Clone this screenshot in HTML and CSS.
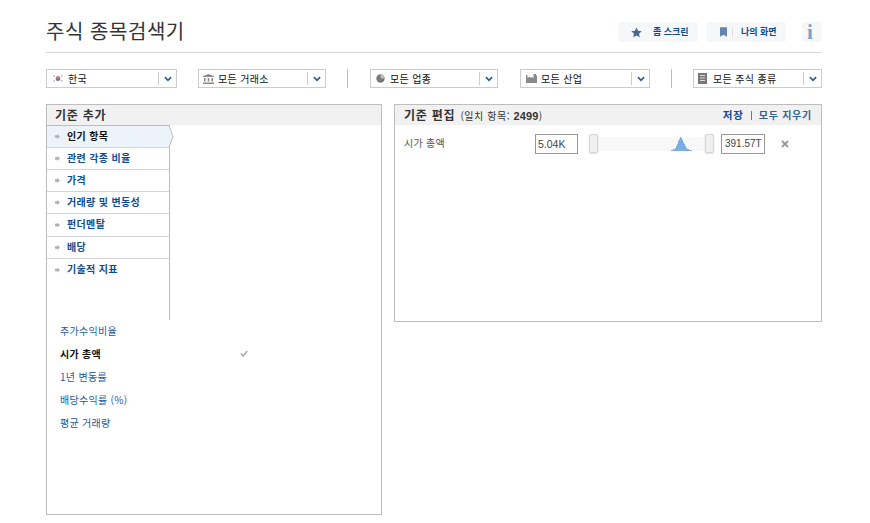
FILE: index.html
```html
<!DOCTYPE html>
<html lang="ko">
<head>
<meta charset="utf-8">
<title>주식 종목검색기</title>
<link rel="stylesheet" href="styles.css">
</head>
<body>
<div class="page">
  <header class="top">
    <h1 class="title">주식 종목검색기</h1>
    <div class="actions">
      <a class="action act-a"><svg class="aicon" viewBox="0 0 12 12"><path d="M6 .5l1.7 3.7 4 .4-3 2.7.9 4L6 9.3l-3.6 2 .9-4-3-2.7 4-.4z"/></svg><span class="alabel l1">좀 스크린</span></a>
      <a class="action act-b"><svg class="aicon small" viewBox="0 0 8 11"><path d="M0 0h8v11L4 8.5 0 11z"/></svg><i class="vr"></i><span class="alabel l2">나의 화면</span></a>
      <a class="action act-i"><span class="info">i</span></a>
    </div>
  </header>

  <div class="filters">
    <div class="sel s1">
      <svg class="ic" viewBox="0 0 10 9"><circle cx="5" cy="4.5" r="2.4" fill="#d77"/><path d="M2.6 4.5a2.4 2.4 0 0 0 4.8 0z" fill="#5a7fb5"/><path d="M.5 1.5l1.4 1M.5 7.5l1.4-1M9.5 1.5l-1.4 1M9.5 7.5l-1.4-1" stroke="#aaa" stroke-width="1.1"/></svg>
      <span class="stext">한국</span><span class="chev"><svg viewBox="0 0 9 6"><path d="M1 1l3.5 3.5L8 1" fill="none" stroke="#2b5f96" stroke-width="2"/></svg></span>
    </div>
    <div class="sel s2">
      <svg class="ic" viewBox="0 0 11 10"><path d="M5.5 0L11 2.2V3H0v-.8zM1 4h1.6v3.4H1zM4.7 4h1.6v3.4H4.7zM8.4 4H10v3.4H8.4zM0 8.4h11V10H0z" fill="#888"/></svg>
      <span class="stext">모든 거래소</span><span class="chev"><svg viewBox="0 0 9 6"><path d="M1 1l3.5 3.5L8 1" fill="none" stroke="#2b5f96" stroke-width="2"/></svg></span>
    </div>
    <i class="divider d1"></i>
    <div class="sel s3">
      <svg class="ic" viewBox="0 0 10 10"><circle cx="5" cy="5" r="4.6" fill="#777"/><path d="M5 5V.4A4.6 4.6 0 0 1 9.6 5z" fill="#bbb"/></svg>
      <span class="stext">모든 업종</span><span class="chev"><svg viewBox="0 0 9 6"><path d="M1 1l3.5 3.5L8 1" fill="none" stroke="#2b5f96" stroke-width="2"/></svg></span>
    </div>
    <div class="sel s4">
      <svg class="ic" viewBox="0 0 11 9"><path d="M0 1h1.5v3L4 2.5V4l2.5-1.5V4h1V0H10v1.5h1V9H0z" fill="#888"/></svg>
      <span class="stext">모든 산업</span><span class="chev"><svg viewBox="0 0 9 6"><path d="M1 1l3.5 3.5L8 1" fill="none" stroke="#2b5f96" stroke-width="2"/></svg></span>
    </div>
    <i class="divider d2"></i>
    <div class="sel s5">
      <svg class="ic" viewBox="0 0 9 11"><path d="M0 0h9v11H0z" fill="#777"/><path d="M2 2.5h5M2 5h5M2 7.5h5" stroke="#ddd"/></svg>
      <span class="stext">모든 주식 종류</span><span class="chev"><svg viewBox="0 0 9 6"><path d="M1 1l3.5 3.5L8 1" fill="none" stroke="#2b5f96" stroke-width="2"/></svg></span>
    </div>
  </div>

  <main class="panels">
    <section class="panel left">
      <h2 class="phead">기준 추가</h2>
      <ul class="nav">
        <li class="nav-item active"><span class="dot"></span>인기 항목<svg class="tip" viewBox="0 0 5 23"><path d="M0 0.5l4 11-4 11z" fill="#ecf3fb"/><path d="M0 0.5l4 11-4 11" fill="none" stroke="#bdbdbd"/></svg></li>
        <li class="nav-item"><span class="dot"></span>관련 각종 비율</li>
        <li class="nav-item"><span class="dot"></span>가격</li>
        <li class="nav-item"><span class="dot"></span>거래량 및 변동성</li>
        <li class="nav-item tall"><span class="dot"></span>펀더멘탈</li>
        <li class="nav-item"><span class="dot"></span>배당</li>
        <li class="nav-item"><span class="dot"></span>기술적 지표</li>
      </ul>
      <ul class="crit">
        <li class="crit-item">주가수익비율</li>
        <li class="crit-item on">시가 총액<svg class="check" viewBox="0 0 10 8"><path d="M1 4l3 3 5-6" fill="none" stroke="#aaa" stroke-width="2"/></svg></li>
        <li class="crit-item">1년 변동률</li>
        <li class="crit-item">배당수익률 (%)</li>
        <li class="crit-item">평균 거래량</li>
      </ul>
    </section>

    <section class="panel right">
      <div class="phead rhead">
        <h2 class="rtitle">기준 편집 <span class="match">(일치 항목: <b>2499</b>)</span></h2>
        <div class="links"><a class="save">저장</a><i class="lsep"></i><a class="clear">모두 지우기</a></div>
      </div>
      <div class="row">
        <span class="rlabel">시가 총액</span>
        <span class="val v1">5.04K</span>
        <div class="slider">
          <svg class="hist" viewBox="0 0 22 14" preserveAspectRatio="none"><path d="M0 14v-1h2v-1h2v-1h1V9h1V7h1V4h1V2h1V0h1v1h1v2h1v2h1v2h1v2h1v2h1v1h2v1h3v1z" fill="#78aee4"/></svg>
          <i class="handle hl"></i><i class="handle hr"></i>
        </div>
        <span class="val v2">391.57T</span>
        <svg class="close" viewBox="0 0 8 8"><path d="M1 1l6 6M7 1l-6 6" stroke="#999" stroke-width="1.8"/></svg>
      </div>
    </section>
  </main>
</div>
</body>
</html>
```
FILE: styles.css
```css
* { box-sizing: border-box; }
html, body { margin: 0; padding: 0; background: #fff; }
body { font-family: "Noto Sans CJK KR", "Liberation Sans", sans-serif; color: #333; }
ul { list-style: none; margin: 0; padding: 0; }
h1, h2 { margin: 0; font-weight: normal; }
a { color: #0f4c92; }

.page { width: 776px; margin-left: 46px; }

.top { height: 53px; border-bottom: 1px solid #d9d9d9; display: flex; justify-content: space-between; padding-top: 21px; }
.title { font-size: 20px; line-height: 20px; letter-spacing: 0.55px; color: #333; }
.actions { display: flex; gap: 8px; margin-top: 1px; }
.action { height: 20px; background: #f6f7f8; border-radius: 2px; display: flex; align-items: center; font-size: 9px; font-weight: 700; }
.alabel { padding-bottom: 2px; }
.act-a { width: 80px; padding-left: 13px; }
.act-b { width: 80px; padding-left: 14px; }
.act-i { width: 20px; margin-left: 8px; justify-content: center; padding-right: 4px; }
.aicon { width: 11px; height: 11px; fill: #48688f; flex: none; }
.aicon.small { width: 7px; height: 10px; fill: #6485ad; }
.vr { width: 1px; height: 9px; background: #ddd; margin: 0 8px 0 5px; }
.l1 { margin-left: 11px; }
.info { font-family: "Liberation Serif", serif; font-size: 21px; font-weight: 700; color: #7ba0cc; line-height: 20px; }

.filters { display: flex; align-items: center; height: 19px; margin-top: 16px; }
.sel { height: 19px; border: 1px solid #ccc; background: #fff; display: flex; align-items: center; font-size: 10px; color: #111; flex: none; }
.s1 { width: 131px; padding-left: 6px; }
.s2 { width: 128px; margin-left: 21px; padding-left: 4px; }
.s3 { width: 128px; padding-left: 5px; }
.s4 { width: 130px; margin-left: 22px; padding-left: 5px; }
.s5 { width: 129px; padding-left: 4px; }
.ic { flex: none; }
.s1 .ic { width: 10px; height: 9px; margin-right: 5px; }
.s2 .ic { width: 11px; height: 10px; margin-right: 4px; }
.s3 .ic { width: 9px; height: 9px; margin-right: 5px; }
.s4 .ic { width: 11px; height: 9px; margin-right: 4px; }
.s5 .ic { width: 9px; height: 11px; margin-right: 6px; }
.stext { flex: 1; letter-spacing: 0.35px; line-height: 17px; padding-bottom: 2px; height: 17px; }
.chev { width: 18px; height: 13px; border-left: 1px solid #ccc; display: flex; align-items: center; justify-content: center; flex: none; }
.chev svg { width: 8px; height: 6px; }
.divider { width: 1px; height: 19px; background: #bbb; flex: none; }
.d1 { margin: 0 22px 0 21px; }
.d2 { margin: 0 21px; }

.panels { display: flex; align-items: flex-start; gap: 12px; margin-top: 16px; }
.panel { border: 1px solid #bdbdbd; background: #fff; }
.left { width: 336px; height: 411px; }
.right { width: 428px; height: 218px; }
.phead { height: 20px; background: #f1f1f1; font-size: 12px; font-weight: 700; line-height: 20px; padding-left: 8px; letter-spacing: 0.75px; color: #333; }

.nav { width: 123px; height: 195px; border-right: 1px solid #bdbdbd; }
.nav-item { height: 22px; border-bottom: 1px solid #d5d5d5; display: flex; align-items: center; font-size: 10px; font-weight: 700; color: #0f4c92; letter-spacing: 0.35px; padding: 0 0 3px 8px; }
.nav-item:last-child { border-bottom: 0; }
.nav-item.tall { height: 23px; }
.nav-item.active { height: 23px; background: #ecf3fb; color: #111; border-top: 1px solid #bdbdbd; position: relative; }
.tip { position: absolute; left: 122px; top: -1px; width: 5px; height: 23px; overflow: visible; }
.dot { width: 5px; height: 5px; background: #b0b0b0; margin: 3px 7px 0 0; flex: none; clip-path: polygon(0 25%, 45% 25%, 45% 0, 100% 50%, 45% 100%, 45% 75%, 0 75%); }

.crit { padding-left: 13px; margin-top: -1px; }
.crit-item { height: 23px; display: flex; align-items: center; font-size: 10px; color: #1c5a9c; letter-spacing: 0.3px; width: 188px; justify-content: space-between; }
.crit-item.on { color: #111; font-weight: 700; }
.check { width: 8px; height: 7px; flex: none; }

.rhead { display: flex; justify-content: space-between; padding-right: 9px; padding-left: 9px; }
.rtitle { font-size: 12px; font-weight: 700; letter-spacing: 0.75px; color: #333; line-height: 20px; }
.match { font-size: 10px; font-weight: 400; letter-spacing: 0.55px; margin-left: 1px; }
.match b { font-family: "Liberation Sans", sans-serif; font-size: 11px; font-weight: 700; letter-spacing: 0.2px; }
.links { display: flex; align-items: center; font-size: 10px; letter-spacing: 0.75px; }
.save { font-weight: 700; font-size: 10.5px; color: #0f4c92; }
.clear { color: #2e6399; }
.lsep { width: 1px; height: 9px; background: #777; margin: 0 7px; }

.row { display: flex; align-items: flex-start; padding: 9px 0 0 9px; height: 60px; }
.rlabel { font-size: 10px; letter-spacing: 0.3px; color: #555; width: 131px; line-height: 15px; padding-top: 1px; flex: none; }
.val { height: 20px; border: 1px solid #999; font-family: "Liberation Sans", sans-serif; font-size: 10.5px; line-height: 18px; color: #444; padding-left: 2px; flex: none; }
.v1 { width: 43px; }
.v2 { width: 44px; padding-left: 3px; font-size: 10px; }
.slider { position: relative; width: 125px; height: 14px; margin: 3px 7px 0 11px; background: #f8f8f8; flex: none; }
.hist { position: absolute; left: 82px; top: 0; width: 22px; height: 14px; }
.handle { position: absolute; top: -3px; width: 9px; height: 19px; background: #f0f0f0; border: 1px solid #d4d4d4; border-radius: 2px; box-shadow: 0 1px 2px rgba(0,0,0,.12); }
.hl { left: 0; }
.hr { right: 0; }
.close { width: 8px; height: 8px; margin: 6px 0 0 16px; flex: none; }
```
